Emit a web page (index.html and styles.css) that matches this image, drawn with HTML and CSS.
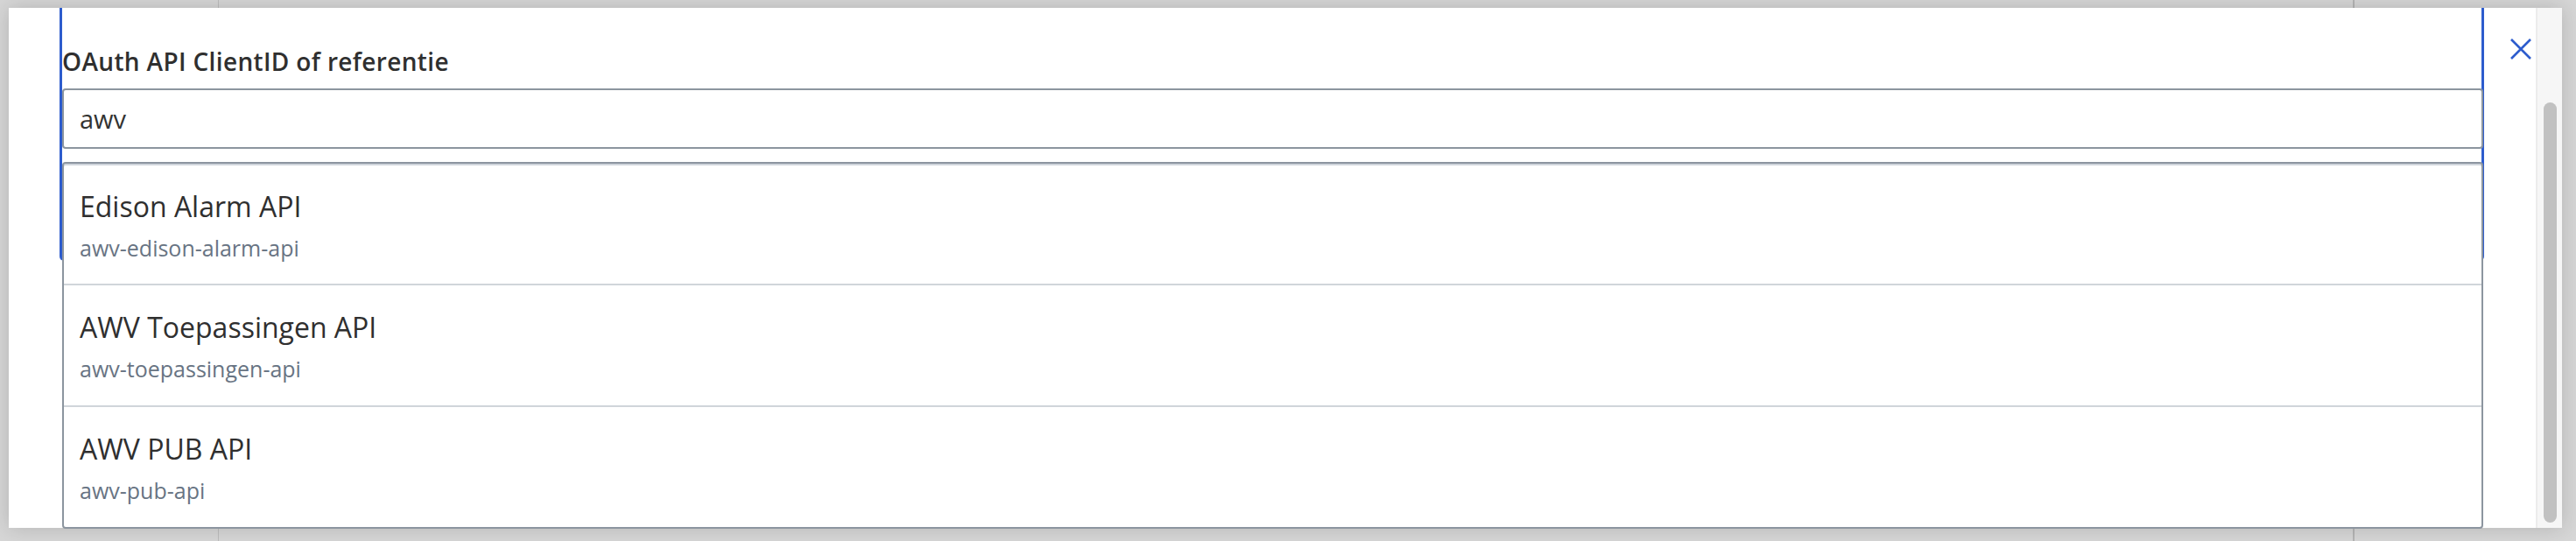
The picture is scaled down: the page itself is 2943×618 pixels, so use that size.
FILE: index.html
```html
<!DOCTYPE html>
<html lang="nl">
<head>
<meta charset="utf-8">
<title>OAuth API ClientID</title>
<link rel="stylesheet" href="styles.css">
</head>
<body>
<div class="page">
  <aside class="page-nav"></aside>
  <main class="page-main"></main>
  <aside class="page-side"></aside>
</div>

<div class="modal" role="dialog">
  <div class="modal-body">
    <div class="field">
      <label class="field-label" for="client">OAuth API ClientID of referentie</label>
      <div class="combo">
        <input id="client" class="combo-input" type="text" value="awv">
        <ul class="combo-menu">
          <li class="combo-item">
            <div class="combo-title">Edison Alarm API</div>
            <div class="combo-sub">awv-edison-alarm-api</div>
          </li>
          <li class="combo-item">
            <div class="combo-title">AWV Toepassingen API</div>
            <div class="combo-sub">awv-toepassingen-api</div>
          </li>
          <li class="combo-item">
            <div class="combo-title">AWV PUB API</div>
            <div class="combo-sub">awv-pub-api</div>
          </li>
        </ul>
      </div>
    </div>
  </div>
  <button class="modal-close" aria-label="Sluiten">
    <svg width="24" height="24" viewBox="0 0 24 24"><path d="M1 1 L23 23 M23 1 L1 23" stroke="#2d5ccd" stroke-width="2.6" fill="none"/></svg>
  </button>
  <div class="scrollbar"><div class="scrollbar-thumb"></div></div>
</div>
</body>
</html>
```

FILE: styles.css
```css
* { box-sizing: border-box; }
html, body { margin: 0; padding: 0; }
body {
  width: 2943px;
  height: 618px;
  overflow: hidden;
  background: #d6d6d6;
  font-family: "Open Sans", "Noto Sans", sans-serif;
  position: relative;
}
.page {
  display: flex;
  height: 618px;
}
.page-nav {
  width: 250px;
  border-right: 1px solid #bcbcbc;
}
.page-main { flex: 1; }
.page-side {
  width: 255px;
  border-left: 2px solid #b4b4b4;
}

.modal {
  position: absolute;
  left: 10px;
  top: 9px;
  width: 2917px;
  height: 594px;
  background: #ffffff;
  display: flex;
  box-shadow: 0 0 22px rgba(0, 0, 0, 0.16);
}
.modal-body {
  flex: 1;
  padding: 0 59px 0 58px;
}
.field {
  height: 289px;
  padding-top: 43px;
  border: 3px solid #2d5ccd;
  border-top: none;
  border-radius: 0 0 5px 5px;
  position: relative;
}
.field-label {
  display: block;
  font-size: 28px;
  line-height: 37px;
  font-weight: 600;
  color: #2f2f2f;
  letter-spacing: 0.35px;
}
.combo {
  position: relative;
  margin-top: 12px;
  margin-right: -2px;
}
.combo-input {
  display: block;
  width: 100%;
  height: 69px;
  border: 2px solid #8c959f;
  border-radius: 4px;
  padding: 0 18px;
  font-family: inherit;
  font-size: 29px;
  color: #333332;
  background: #fff;
  outline: none;
}
.combo-menu {
  position: absolute;
  left: 0;
  right: 0;
  top: calc(100% + 15px);
  margin: 0;
  padding: 0;
  list-style: none;
  background: #fff;
  border: 2px solid #8c959f;
  border-radius: 4px;
  box-shadow: inset 0 2px 0 #cfd5dc;
}
.combo-item {
  height: 139px;
  padding: 27px 18px 0;
  border-top: 2px solid #d0d5da;
}
.combo-item:first-child { border-top: none; height: 137px; padding-top: 28px; }
.combo-item:last-child { height: 139px; }
.combo-title {
  font-size: 32px;
  line-height: 41px;
  color: #2f2f2f;
}
.combo-sub {
  margin-top: 10px;
  font-size: 25px;
  line-height: 35px;
  color: #687483;
}

.modal-close {
  position: absolute;
  top: 35px;
  right: 35px;
  width: 24px;
  height: 24px;
  padding: 0;
  border: none;
  background: transparent;
  display: flex;
}
.scrollbar {
  width: 30px;
  height: 100%;
  background: #f6f6f6;
  border-left: 2px solid #ececec;
  padding: 108px 6px 6px 7px;
}
.scrollbar-thumb {
  width: 15px;
  height: 480px;
  border-radius: 8px;
  background: #c1c1c1;
}
```
